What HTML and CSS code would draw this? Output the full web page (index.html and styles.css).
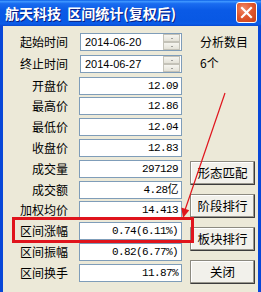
FILE: index.html
```html
<!DOCTYPE html>
<html>
<head>
<meta charset="utf-8">
<link rel="stylesheet" href="styles.css">
</head>
<body>
<div class="window">
  <div class="titlebar">
    <span class="title">航天科技&nbsp;&nbsp;区间统计(复权后)</span>
    <div class="close"><svg width="19" height="19" viewBox="0 0 19 19"><path d="M5 5 L14 14 M14 5 L5 14" stroke="#fff" stroke-width="2.2" stroke-linecap="square"/></svg></div>
  </div>
  <div class="client">
    <div class="form">
      <div class="row first"><span class="label">起始时间</span><div class="field date"><span>2014-06-20</span><div class="spin"><div class="sb"><i class="up"></i></div><div class="sb"><i class="down"></i></div></div></div></div>
      <div class="row loose"><span class="label">终止时间</span><div class="field date"><span>2014-06-27</span><div class="spin"><div class="sb"><i class="up"></i></div><div class="sb"><i class="down"></i></div></div></div></div>
      <div class="row loose"><span class="label">开盘价</span><div class="field val">12.09</div></div>
      <div class="row tight"><span class="label">最高价</span><div class="field val">12.86</div></div>
      <div class="row"><span class="label">最低价</span><div class="field val">12.04</div></div>
      <div class="row"><span class="label">收盘价</span><div class="field val">12.83</div></div>
      <div class="row"><span class="label">成交量</span><div class="field val">297129</div></div>
      <div class="row"><span class="label">成交额</span><div class="field val">4.28亿</div></div>
      <div class="row tight"><span class="label">加权均价</span><div class="field val">14.413</div></div>
      <div class="row"><span class="label">区间涨幅</span><div class="field val">0.74(6.11%)</div></div>
      <div class="row"><span class="label">区间振幅</span><div class="field val">0.82(6.77%)</div></div>
      <div class="row"><span class="label">区间换手</span><div class="field val">11.87%</div></div>
    </div>
    <div class="side">
      <div class="info">分析数目</div>
      <div class="info second">6个</div>
      <div class="buttons">
        <div class="btn">形态匹配</div>
        <div class="btn">阶段排行</div>
        <div class="btn">板块排行</div>
        <div class="btn">关闭</div>
      </div>
    </div>
  </div>
  <svg class="annot" width="261" height="292" viewBox="0 0 261 292">
    <rect x="13.5" y="218.5" width="179" height="23" fill="none" stroke="#e0141c" stroke-width="3"/>
    <line x1="225" y1="93" x2="185" y2="210" stroke="#e0141c" stroke-width="1.2"/>
    <polygon points="183,218 181.3,207.5 189.2,210.2" fill="#e0141c"/>
  </svg>
</div>
</body>
</html>
```
FILE: styles.css
```css
html, body {
  margin: 0;
  padding: 0;
  background: #ECE9D8;
}
.window {
  width: 261px;
  height: 292px;
  display: flex;
  flex-direction: column;
  overflow: hidden;
  position: relative;
  font-family: "Noto Sans CJK SC", sans-serif;
  font-size: 12px;
  color: #000;
}
.titlebar {
  height: 26px;
  flex: none;
  display: flex;
  align-items: center;
  justify-content: space-between;
  padding: 0 4px 0 5px;
  box-sizing: border-box;
  background: linear-gradient(180deg, #0B5FE6 0%, #3D95FF 6%, #1A6CF0 14%, #0A5AE6 40%, #0858E4 80%, #0B5CE8 92%, #0848D0 100%);
}
.title {
  color: #fff;
  font-weight: bold;
  font-size: 14px;
  line-height: 16px;
  text-shadow: 1px 1px 0 #0A1E80;
  white-space: nowrap;
}
.close {
  width: 19px;
  height: 19px;
  margin-top: -1px;
  border: 1px solid #fff;
  border-radius: 3px;
  background: radial-gradient(circle at 35% 30%, #F08A6A 0%, #E2582E 45%, #C8401A 100%);
  display: flex;
}
.client {
  flex: 1;
  display: flex;
  background: #ECE9D8;
  border-left: 3px solid #0847D8;
  border-right: 3px solid #0847D8;
}
.form {
  padding-top: 7px;
  display: flex;
  flex-direction: column;
}
.row {
  display: grid;
  grid-template-columns: 65px 103px;
  column-gap: 11px;
  height: 18px;
  margin-top: 3px;
  align-items: center;
}
.row.first { margin-top: 0; }
.row.loose { margin-top: 4px; }
.row.tight { margin-top: 2px; }
.label {
  text-align: right;
  line-height: 18px;
  white-space: nowrap;
}
.field {
  height: 18px;
  box-sizing: border-box;
  border: 1px solid #7F9DB9;
  background: #fff;
  display: flex;
  align-items: center;
}
.field.val {
  justify-content: flex-end;
  padding-right: 3px;
  font-family: "Liberation Mono", "Noto Sans CJK SC", monospace;
  font-size: 11px;
  letter-spacing: -0.6px;
  line-height: 16px;
}
.field.date {
  margin-left: 1px;
  padding-left: 4px;
  justify-content: space-between;
  font-family: "Liberation Sans", sans-serif;
  font-size: 11px;
  line-height: 16px;
}
.spin {
  width: 17px;
  height: 16px;
  display: flex;
  flex-direction: column;
  margin-right: 1px;
}
.sb {
  flex: 1;
  box-sizing: border-box;
  border: 1px solid #C4C2B8;
  background: linear-gradient(#F6F5F0, #E4E2D8);
  display: flex;
  align-items: center;
  justify-content: center;
}
.sb i {
  display: block;
  width: 0;
  height: 0;
  border-left: 1.5px solid transparent;
  border-right: 1.5px solid transparent;
}
.sb i.up { border-bottom: 1.5px solid #555; }
.sb i.down { border-top: 1.5px solid #555; }
.side {
  margin-left: 8px;
  width: 65px;
  padding-top: 7px;
  display: flex;
  flex-direction: column;
}
.info {
  padding-left: 10px;
  line-height: 18px;
  white-space: nowrap;
}
.info.second { margin-top: 3px; }
.buttons {
  margin-top: 89px;
  display: flex;
  flex-direction: column;
  gap: 9px;
}
.btn {
  height: 24px;
  box-sizing: border-box;
  border: 1px solid;
  border-color: #8C8A80 #3C3C3C #3C3C3C #8C8A80;
  border-radius: 1px;
  box-shadow: inset -1px -1px 0 #9A988E, inset 1px 1px 0 #FFFFFF;
  background: #F2F1EB;
  display: flex;
  align-items: center;
  justify-content: center;
  line-height: 18px;
  font-size: 12.5px;
}
.annot {
  position: absolute;
  left: 0;
  top: 0;
  pointer-events: none;
}
```
